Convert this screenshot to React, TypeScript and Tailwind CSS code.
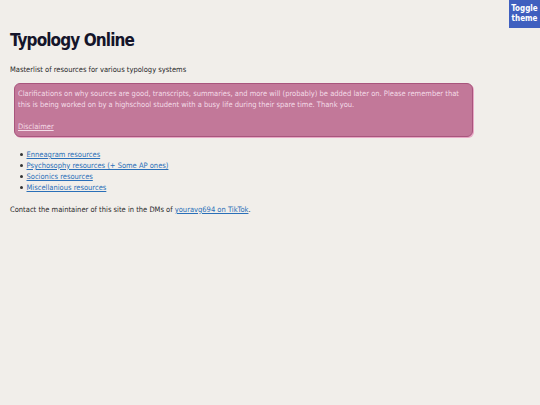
export default function App() {
  const links = [
    "Enneagram resources",
    "Psychosophy resources (+ Some AP ones)",
    "Socionics resources",
    "Miscellanious resources",
  ];

  return (
    <div
      className="relative min-h-[405px] w-full bg-[#f1eeea] text-[#2a2a2a] text-[7.5px] leading-[11px]"
      style={{ fontFamily: '"DejaVu Sans Condensed", "DejaVu Sans", sans-serif', fontStretch: "condensed" }}
    >
      {/* Toggle theme */}
      <button className="absolute right-0 top-0 w-[31px] h-[28px] bg-[#3f5fbf] text-white font-bold text-[8px] leading-[10px] px-[1px]">
        Toggle theme
      </button>

      <div className="px-[10px] pt-[28px]">
        <h1 className="text-[17px] leading-[24px] font-bold tracking-[-0.9px] text-[#15152a]">Typology Online</h1>

        <p className="mt-[12px]">Masterlist of resources for various typology systems</p>

        <div className="mt-[8px] ml-[4px] w-[459px] rounded-[6px] border border-[#a8557d] bg-[#c27899] text-[#f3dbe7] px-[3px] pt-[4px] pb-[4px] shadow-[1px_1px_0_#e9a9c6]">
          <p>
            Clarifications on why sources are good, transcripts, summaries, and more will (probably) be added later on.
            Please remember that this is being worked on by a highschool student with a busy life during their spare
            time. Thank you.
          </p>
          <p className="mt-[11px]">
            <a href="#" className="underline">Disclaimer</a>
          </p>
        </div>

        <ul className="mt-[12px] pl-[10px]">
          {links.map((l) => (
            <li key={l} className="flex items-center gap-[4px]">
              <span className="w-[2.5px] h-[2.5px] rounded-full bg-[#333]" />
              <a href="#" className="underline text-[#2a6fb8]">{l}</a>
            </li>
          ))}
        </ul>

        <p className="mt-[11px]">
          Contact the maintainer of this site in the DMs of{" "}
          <a href="#" className="underline text-[#2a6fb8]">youravg694 on TikTok</a>.
        </p>
      </div>
    </div>
  );
}
